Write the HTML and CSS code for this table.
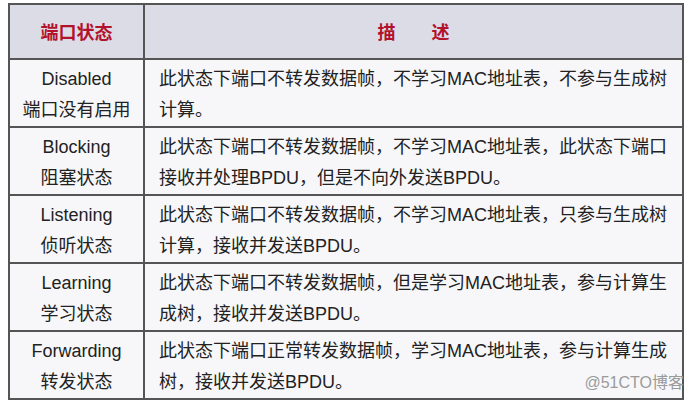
FILE: index.html
```html
<!DOCTYPE html>
<html lang="zh-CN">
<head>
<meta charset="utf-8">
<title>端口状态</title>
<link rel="stylesheet" href="styles.css">
</head>
<body>
<table class="states">
  <thead>
    <tr>
      <th class="col-state">端口状态</th>
      <th class="col-desc">描　　述</th>
    </tr>
  </thead>
  <tbody>
    <tr>
      <td class="state">Disabled<br>端口没有启用</td>
      <td class="desc">此状态下端口不转发数据帧，不学习MAC地址表，不参与生成树计算。</td>
    </tr>
    <tr>
      <td class="state">Blocking<br>阻塞状态</td>
      <td class="desc">此状态下端口不转发数据帧，不学习MAC地址表，此状态下端口接收并处理BPDU，但是不向外发送BPDU。</td>
    </tr>
    <tr>
      <td class="state">Listening<br>侦听状态</td>
      <td class="desc">此状态下端口不转发数据帧，不学习MAC地址表，只参与生成树计算，接收并发送BPDU。</td>
    </tr>
    <tr>
      <td class="state">Learning<br>学习状态</td>
      <td class="desc">此状态下端口不转发数据帧，但是学习MAC地址表，参与计算生成树，接收并发送BPDU。</td>
    </tr>
    <tr>
      <td class="state">Forwarding<br>转发状态</td>
      <td class="desc">此状态下端口正常转发数据帧，学习MAC地址表，参与计算生成树，接收并发送BPDU。<span class="watermark">@51CTO博客</span></td>
    </tr>
  </tbody>
</table>
</body>
</html>
```
FILE: styles.css
```css
html, body {
  margin: 0;
  padding: 0;
  background: #ffffff;
}
body {
  padding: 3px 0 0 8px;
  font-family: "Liberation Sans", "Noto Sans CJK SC", sans-serif;
  color: #222222;
}
.states {
  width: 676px;
  border-collapse: collapse;
  table-layout: fixed;
  font-size: 18px;
  line-height: 31px;
}
.states th,
.states td {
  border: 2px solid #555555;
}
.states th {
  background: #dcdce6;
  color: #b3122c;
  font-weight: bold;
  height: 49px;
  padding: 4px 0 0;
  text-align: center;
  vertical-align: middle;
}
.col-state {
  width: 133px;
}
.states td {
  background: #f7f7f9;
  height: 62px;
  padding: 4px 10px 0 14px;
  vertical-align: top;
}
.states td.state {
  text-align: center;
  padding: 4px 0 0;
}
.watermark {
  float: right;
  margin: 4px -12px 0 0;
  font-size: 16px;
  line-height: 24px;
  color: #9a9a9a;
}
```
